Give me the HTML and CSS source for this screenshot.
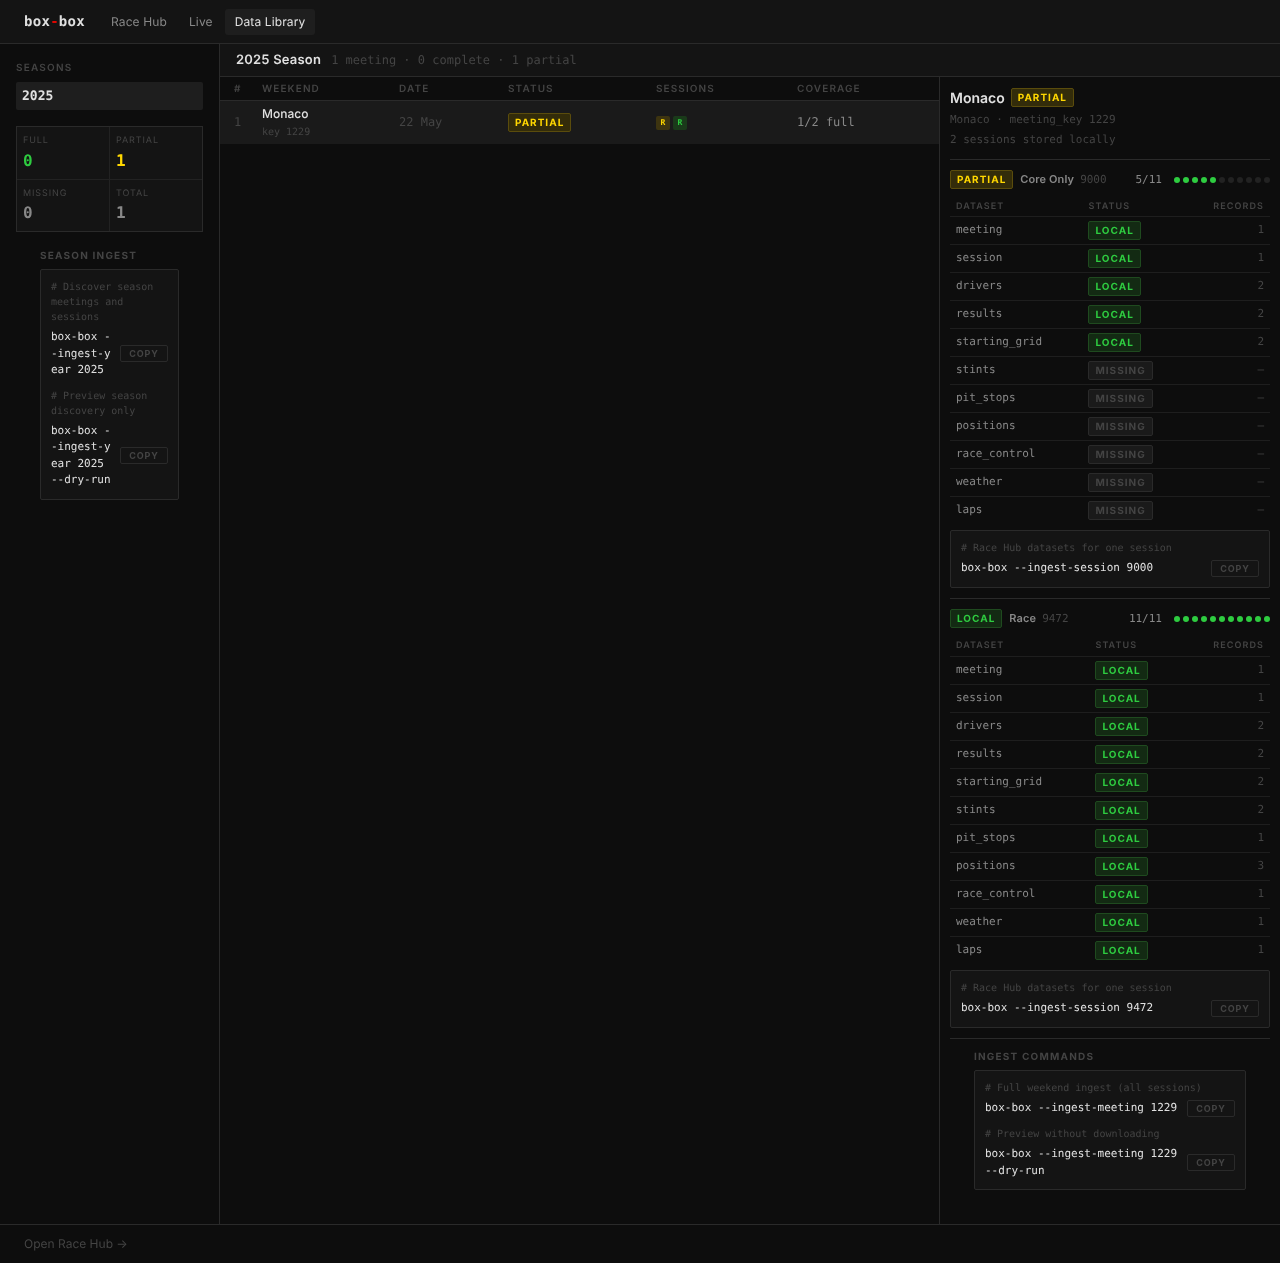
FILE: index.html
```html
<!DOCTYPE html>
<html lang="en">

<head>
    <meta charset="UTF-8">
    <title>box-box - Data Library</title>
    <link rel="stylesheet" href="styles.css">
</head>

<body>
    <header class="topbar">
        <div class="logo">box<span class="logo-dash">-</span>box</div>
        <nav class="nav">
            <a class="nav-link">Race Hub</a>
            <a class="nav-link">Live</a>
            <a class="nav-link active">Data Library</a>
        </nav>
    </header>

    <div class="main">
        <aside class="sidebar">
            <div class="section-label">Seasons</div>
            <div class="season-item">2025</div>

            <div class="stats">
                <div class="stat">
                    <div class="stat-label">Full</div>
                    <div class="stat-value green">0</div>
                </div>
                <div class="stat">
                    <div class="stat-label">Partial</div>
                    <div class="stat-value yellow">1</div>
                </div>
                <div class="stat">
                    <div class="stat-label">Missing</div>
                    <div class="stat-value">0</div>
                </div>
                <div class="stat">
                    <div class="stat-label">Total</div>
                    <div class="stat-value">1</div>
                </div>
            </div>

            <div class="ingest">
                <div class="ingest-title">Season Ingest</div>
                <div class="code-box">
                    <div class="code-group">
                        <div class="code-comment"># Discover season meetings and sessions</div>
                        <div class="code-row">
                            <div class="code-cmd">box-box --ingest-year 2025</div>
                            <button class="copy-btn">Copy</button>
                        </div>
                    </div>
                    <div class="code-group">
                        <div class="code-comment"># Preview season discovery only</div>
                        <div class="code-row">
                            <div class="code-cmd">box-box --ingest-year 2025 --dry-run</div>
                            <button class="copy-btn">Copy</button>
                        </div>
                    </div>
                </div>
            </div>
        </aside>

        <div class="content">
            <div class="season-head">
                <span class="season-title">2025 Season</span>
                <span class="season-meta">1 meeting · 0 complete · 1 partial</span>
            </div>

            <div class="panes">
                <section class="center">
                    <table class="weekends">
                        <colgroup>
                            <col class="col-num">
                            <col class="col-weekend">
                            <col class="col-date">
                            <col class="col-status">
                            <col class="col-sessions">
                            <col>
                        </colgroup>
                        <thead>
                            <tr>
                                <th>#</th>
                                <th>Weekend</th>
                                <th>Date</th>
                                <th>Status</th>
                                <th>Sessions</th>
                                <th>Coverage</th>
                            </tr>
                        </thead>
                        <tbody>
                            <tr>
                                <td class="round">1</td>
                                <td>
                                    <div class="weekend-name">Monaco</div>
                                    <div class="weekend-key">key 1229</div>
                                </td>
                                <td class="date">22 May</td>
                                <td><span class="badge partial">Partial</span></td>
                                <td>
                                    <div class="chips">
                                        <span class="chip chip-partial">R</span>
                                        <span class="chip chip-local">R</span>
                                    </div>
                                </td>
                                <td class="coverage">1/2 full</td>
                            </tr>
                        </tbody>
                    </table>
                </section>

                <aside class="detail">
                    <div class="detail-head">
                        <div class="detail-title">
                            <span class="detail-name">Monaco</span>
                            <span class="badge partial">Partial</span>
                        </div>
                        <div class="detail-meta">Monaco · meeting_key 1229</div>
                        <div class="detail-meta">2 sessions stored locally</div>
                    </div>

                    <div class="session">
                        <div class="session-head">
                            <span class="badge partial">Partial</span>
                            <span class="session-name">Core Only</span>
                            <span class="session-key">9000</span>
                            <span class="session-count">5/11</span>
                            <span class="dots">
                                <i class="dot on"></i><i class="dot on"></i><i class="dot on"></i><i class="dot on"></i><i class="dot on"></i><i class="dot"></i><i class="dot"></i><i class="dot"></i><i class="dot"></i><i class="dot"></i><i class="dot"></i>
                            </span>
                        </div>
                        <table class="datasets">
                            <thead>
                                <tr><th>Dataset</th><th>Status</th><th class="num">Records</th></tr>
                            </thead>
                            <tbody>
                                <tr><td>meeting</td><td class="status"><span class="badge local">Local</span></td><td class="num">1</td></tr>
                                <tr><td>session</td><td class="status"><span class="badge local">Local</span></td><td class="num">1</td></tr>
                                <tr><td>drivers</td><td class="status"><span class="badge local">Local</span></td><td class="num">2</td></tr>
                                <tr><td>results</td><td class="status"><span class="badge local">Local</span></td><td class="num">2</td></tr>
                                <tr><td>starting_grid</td><td class="status"><span class="badge local">Local</span></td><td class="num">2</td></tr>
                                <tr><td>stints</td><td class="status"><span class="badge missing">Missing</span></td><td class="num">—</td></tr>
                                <tr><td>pit_stops</td><td class="status"><span class="badge missing">Missing</span></td><td class="num">—</td></tr>
                                <tr><td>positions</td><td class="status"><span class="badge missing">Missing</span></td><td class="num">—</td></tr>
                                <tr><td>race_control</td><td class="status"><span class="badge missing">Missing</span></td><td class="num">—</td></tr>
                                <tr><td>weather</td><td class="status"><span class="badge missing">Missing</span></td><td class="num">—</td></tr>
                                <tr><td>laps</td><td class="status"><span class="badge missing">Missing</span></td><td class="num">—</td></tr>
                            </tbody>
                        </table>
                        <div class="code-box">
                            <div class="code-group">
                                <div class="code-comment"># Race Hub datasets for one session</div>
                                <div class="code-row">
                                    <div class="code-cmd">box-box --ingest-session 9000</div>
                                    <button class="copy-btn">Copy</button>
                                </div>
                            </div>
                        </div>
                    </div>

                    <div class="session">
                        <div class="session-head">
                            <span class="badge local">Local</span>
                            <span class="session-name">Race</span>
                            <span class="session-key">9472</span>
                            <span class="session-count">11/11</span>
                            <span class="dots">
                                <i class="dot on"></i><i class="dot on"></i><i class="dot on"></i><i class="dot on"></i><i class="dot on"></i><i class="dot on"></i><i class="dot on"></i><i class="dot on"></i><i class="dot on"></i><i class="dot on"></i><i class="dot on"></i>
                            </span>
                        </div>
                        <table class="datasets">
                            <thead>
                                <tr><th>Dataset</th><th>Status</th><th class="num">Records</th></tr>
                            </thead>
                            <tbody>
                                <tr><td>meeting</td><td class="status"><span class="badge local">Local</span></td><td class="num">1</td></tr>
                                <tr><td>session</td><td class="status"><span class="badge local">Local</span></td><td class="num">1</td></tr>
                                <tr><td>drivers</td><td class="status"><span class="badge local">Local</span></td><td class="num">2</td></tr>
                                <tr><td>results</td><td class="status"><span class="badge local">Local</span></td><td class="num">2</td></tr>
                                <tr><td>starting_grid</td><td class="status"><span class="badge local">Local</span></td><td class="num">2</td></tr>
                                <tr><td>stints</td><td class="status"><span class="badge local">Local</span></td><td class="num">2</td></tr>
                                <tr><td>pit_stops</td><td class="status"><span class="badge local">Local</span></td><td class="num">1</td></tr>
                                <tr><td>positions</td><td class="status"><span class="badge local">Local</span></td><td class="num">3</td></tr>
                                <tr><td>race_control</td><td class="status"><span class="badge local">Local</span></td><td class="num">1</td></tr>
                                <tr><td>weather</td><td class="status"><span class="badge local">Local</span></td><td class="num">1</td></tr>
                                <tr><td>laps</td><td class="status"><span class="badge local">Local</span></td><td class="num">1</td></tr>
                            </tbody>
                        </table>
                        <div class="code-box">
                            <div class="code-group">
                                <div class="code-comment"># Race Hub datasets for one session</div>
                                <div class="code-row">
                                    <div class="code-cmd">box-box --ingest-session 9472</div>
                                    <button class="copy-btn">Copy</button>
                                </div>
                            </div>
                        </div>
                    </div>

                    <div class="ingest ingest-weekend">
                        <div class="ingest-title">Ingest Commands</div>
                        <div class="code-box">
                            <div class="code-group">
                                <div class="code-comment"># Full weekend ingest (all sessions)</div>
                                <div class="code-row">
                                    <div class="code-cmd">box-box --ingest-meeting 1229</div>
                                    <button class="copy-btn">Copy</button>
                                </div>
                            </div>
                            <div class="code-group">
                                <div class="code-comment"># Preview without downloading</div>
                                <div class="code-row">
                                    <div class="code-cmd">box-box --ingest-meeting 1229 --dry-run</div>
                                    <button class="copy-btn">Copy</button>
                                </div>
                            </div>
                        </div>
                    </div>
                </aside>
            </div>
        </div>
    </div>

    <footer class="footer">
        <a class="footer-link">Open Race Hub →</a>
    </footer>
</body>

</html>
```

FILE: styles.css
```css
* {
    box-sizing: border-box;
}

body {
    margin: 0;
    height: 1263px;
    display: flex;
    flex-direction: column;
    overflow: hidden;
    background: #0d0d0d;
    color: #e0e0e0;
    font-family: 'Inter', 'Liberation Sans', sans-serif;
    font-size: 12px;
    text-rendering: geometricPrecision;
    will-change: transform;
}

/* top bar */
.topbar {
    height: 44px;
    flex-shrink: 0;
    display: flex;
    align-items: center;
    padding: 0 24px;
    background: #141414;
    border-bottom: 1px solid #2a2a2a;
}

.logo {
    font-family: 'DejaVu Sans Mono', monospace;
    font-weight: 700;
    font-size: 14px;
    letter-spacing: 0.02em;
    color: #e0e0e0;
    margin-right: 16px;
}

.logo-dash {
    color: #e10600;
}

.nav {
    display: flex;
    gap: 2px;
}

.nav-link {
    padding: 6px 10px;
    font-size: 12px;
    line-height: 14px;
    letter-spacing: 0.01em;
    color: #888;
    border-radius: 3px;
    height: 26px;
}

.nav-link.active {
    background: #1e1e1e;
    color: #e0e0e0;
}

/* layout */
.main {
    flex: 1;
    display: flex;
    min-height: 0;
}

.sidebar {
    width: 220px;
    flex-shrink: 0;
    padding: 17px 16px 16px;
    border-right: 1px solid #2a2a2a;
}

.section-label {
    font-size: 10px;
    line-height: 14px;
    font-weight: 600;
    letter-spacing: 0.12em;
    text-transform: uppercase;
    color: #444;
    margin-bottom: 7px;
}

.season-item {
    height: 28px;
    padding: 0 6px;
    line-height: 30px;
    font-family: 'DejaVu Sans Mono', monospace;
    font-size: 13px;
    font-weight: 700;
    color: #e0e0e0;
    background: #1e1e1e;
    border-radius: 2px;
}

.stats {
    margin-top: 16px;
    display: grid;
    grid-template-columns: 1fr 1fr;
    gap: 1px;
    background: #222;
    border: 1px solid #2a2a2a;
}

.stat {
    padding: 8px 6px;
    background: #141414;
}

.stat:nth-child(n+3) .stat-value {
    margin-top: 4px;
}

.stat-label {
    font-size: 9px;
    line-height: 11px;
    letter-spacing: 0.1em;
    text-transform: uppercase;
    color: #444;
}

.stat-value {
    margin-top: 5px;
    font-family: 'DejaVu Sans Mono', monospace;
    font-size: 16px;
    line-height: 20px;
    font-weight: 700;
    color: #888;
}

.stat-value.green {
    color: #2ecc40;
}

.stat-value.yellow {
    color: #ffd700;
}

/* ingest commands */
.ingest {
    margin-top: 17px;
    padding: 0 24px;
}

.ingest-title {
    font-size: 10px;
    line-height: 14px;
    font-weight: 700;
    letter-spacing: 0.12em;
    text-transform: uppercase;
    color: #444;
    margin-bottom: 6px;
}

.code-box {
    padding: 10px;
    background: #141414;
    border: 1px solid #2a2a2a;
    border-radius: 2px;
}

.code-group + .code-group {
    margin-top: 10px;
}

.code-comment {
    font-family: 'DejaVu Sans Mono', monospace;
    font-size: 10px;
    line-height: 15px;
    color: #444;
    margin-bottom: 4px;
}

.code-row {
    display: flex;
    align-items: center;
    gap: 9px;
}

.code-cmd {
    flex: 1;
    min-width: 0;
    font-family: 'DejaVu Sans Mono', monospace;
    font-size: 11px;
    line-height: 16.5px;
    color: #e0e0e0;
    word-break: break-all;
    white-space: pre-wrap;
}

.copy-btn {
    flex-shrink: 0;
    width: 48px;
    height: 17px;
    padding: 0;
    font-family: 'Inter', 'Liberation Sans', sans-serif;
    font-size: 9px;
    font-weight: 700;
    letter-spacing: 0.1em;
    text-transform: uppercase;
    color: #444;
    background: transparent;
    border: 1px solid #2a2a2a;
    border-radius: 2px;
}

/* season header and panes */
.content {
    flex: 1;
    min-width: 0;
    display: flex;
    flex-direction: column;
}

.season-head {
    height: 33px;
    flex-shrink: 0;
    display: flex;
    align-items: center;
    gap: 10px;
    padding: 0 16px;
    background: #141414;
    border-bottom: 1px solid #2a2a2a;
}

.season-title {
    font-size: 13px;
    font-weight: 600;
    letter-spacing: 0.015em;
    color: #e0e0e0;
}

.season-meta {
    font-family: 'DejaVu Sans Mono', monospace;
    font-size: 12px;
    color: #444;
}

.panes {
    flex: 1;
    display: flex;
    min-height: 0;
}

/* weekends table */
.center {
    flex: 1;
    min-width: 0;
    border-right: 1px solid #2a2a2a;
}

.weekends {
    width: 100%;
    table-layout: fixed;
    border-collapse: separate;
    border-spacing: 0;
}

.col-num {
    width: 28px;
}

.col-weekend {
    width: 137px;
}

.col-date {
    width: 109px;
}

.col-status {
    width: 148px;
}

.col-sessions {
    width: 141px;
}

.weekends th {
    height: 24px;
    padding: 1px 14px 0;
    text-align: left;
    font-size: 10px;
    font-weight: 600;
    letter-spacing: 0.11em;
    text-transform: uppercase;
    color: #444;
    border-bottom: 1px solid #2a2a2a;
}

.weekends th:first-child,
.weekends td:first-child {
    padding-left: 14px;
    padding-right: 0;
}

.weekends td {
    height: 43px;
    padding: 0 14px;
    background: #1a1a1a;
}

.weekends td.round,
.weekends td.date,
.weekends td.coverage {
    padding-bottom: 2px;
}

.round {
    font-family: 'DejaVu Sans Mono', monospace;
    color: #444;
}

.weekend-name {
    font-size: 12px;
    line-height: 16px;
    font-weight: 500;
    color: #e0e0e0;
}

.weekend-key {
    margin-top: 4px;
    font-family: 'DejaVu Sans Mono', monospace;
    font-size: 10px;
    line-height: 14px;
    color: #444;
}

.date {
    font-family: 'DejaVu Sans Mono', monospace;
    color: #444;
}

.coverage {
    font-family: 'DejaVu Sans Mono', monospace;
    font-size: 12px;
    color: #888;
}

.chips {
    display: flex;
    gap: 3px;
}

.chip {
    width: 14px;
    height: 14px;
    display: flex;
    align-items: center;
    justify-content: center;
    font-family: 'DejaVu Sans Mono', monospace;
    font-size: 8px;
    font-weight: 700;
    border-radius: 2px;
}

.chip-partial {
    background: #3d3410;
    color: #ffd700;
}

.chip-local {
    background: #1a3a1a;
    color: #2ecc40;
}

/* badges */
.badge {
    display: inline-block;
    height: 19px;
    padding: 0 6px;
    font-size: 10px;
    line-height: 18px;
    font-weight: 700;
    letter-spacing: 0.1em;
    text-transform: uppercase;
    border: 1px solid;
    border-radius: 2px;
    white-space: nowrap;
}

.badge.partial {
    color: #ffd700;
    background: #332c0a;
    border-color: #5a4c0c;
}

.badge.local {
    color: #2ecc40;
    background: #132a13;
    border-color: #1f4a1f;
}

.badge.missing {
    color: #444;
    background: #1a1a1a;
    border-color: #2a2a2a;
}

/* detail panel */
.detail {
    width: 340px;
    flex-shrink: 0;
    padding: 11px 10px 0;
}

.detail-head {
    padding-bottom: 9px;
    border-bottom: 1px solid #2a2a2a;
}

.detail-title {
    display: flex;
    align-items: center;
    gap: 6px;
    margin-bottom: 3px;
}

.detail-name {
    padding-top: 1px;
    font-size: 14px;
    font-weight: 600;
    color: #e0e0e0;
}

.detail-meta {
    font-family: 'DejaVu Sans Mono', monospace;
    font-size: 11px;
    line-height: 20px;
    color: #444;
}

.session {
    padding: 10px 0;
    border-bottom: 1px solid #2a2a2a;
}

.session-head {
    display: flex;
    align-items: center;
    height: 19px;
}

.session-name {
    margin-left: 7px;
    margin-bottom: 1px;
    font-size: 11px;
    font-weight: 600;
    letter-spacing: 0.01em;
    color: #888;
}

.session-key {
    margin-left: 6px;
    margin-bottom: 1px;
    font-family: 'DejaVu Sans Mono', monospace;
    font-size: 11px;
    color: #444;
}

.session-count {
    margin-left: auto;
    margin-bottom: 1px;
    font-family: 'DejaVu Sans Mono', monospace;
    font-size: 11px;
    color: #888;
}

.dots {
    display: flex;
    gap: 3px;
    margin-left: 12px;
}

.dot {
    width: 6px;
    height: 6px;
    border-radius: 50%;
    background: #222;
}

.dot.on {
    background: #2ecc40;
}

.datasets {
    width: 100%;
    margin: 7px 0 6px;
    border-collapse: collapse;
}

.session + .session .datasets {
    margin-top: 8px;
}

.datasets th {
    height: 20px;
    padding: 2px 6px 0;
    text-align: left;
    font-size: 9px;
    font-weight: 600;
    letter-spacing: 0.12em;
    text-transform: uppercase;
    color: #444;
}

.session + .session .datasets th {
    padding-top: 0;
}

.datasets td {
    height: 28px;
    padding: 0 6px 2px;
    font-family: 'DejaVu Sans Mono', monospace;
    font-size: 11px;
    color: #888;
    border-top: 1px solid #1e1e1e;
}

.datasets td.status {
    padding-bottom: 0;
}

.datasets td .badge {
    font-family: 'Inter', 'Liberation Sans', sans-serif;
    vertical-align: middle;
}

.datasets .num {
    text-align: right;
}

.datasets td.num {
    color: #444;
}

.ingest-weekend {
    margin-top: 11px;
}

/* footer */
.footer {
    height: 39px;
    flex-shrink: 0;
    display: flex;
    align-items: center;
    padding: 0 24px 2px;
    background: #0d0d0d;
    border-top: 1px solid #2a2a2a;
}

.footer-link {
    font-size: 12px;
    color: #444;
}
```
